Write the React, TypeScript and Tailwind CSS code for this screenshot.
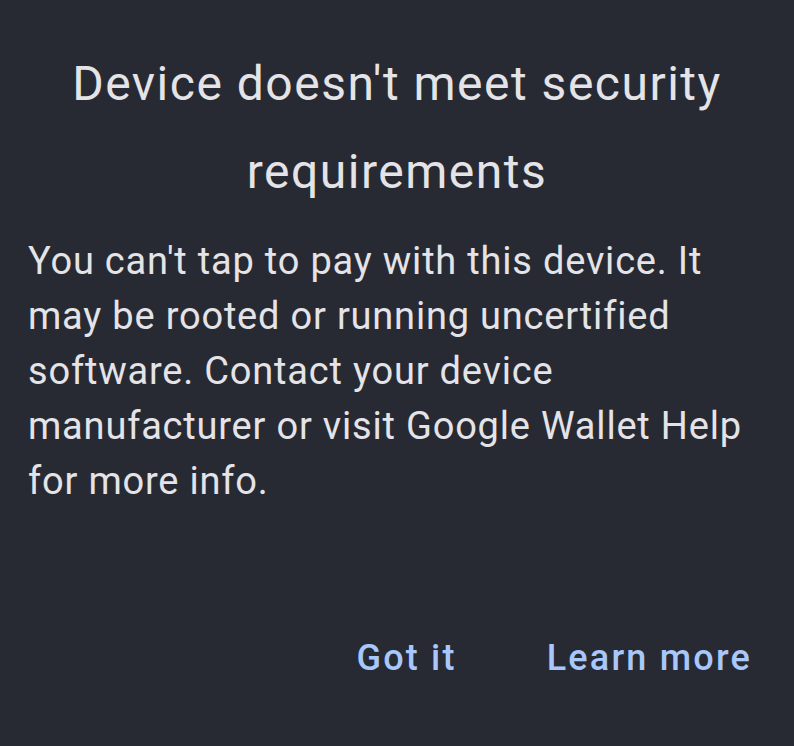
export default function App() {
  return (
    <div className="w-[794px] h-[746px] bg-[#282a33] overflow-hidden flex flex-col" style={{ fontFamily: "Roboto, 'Noto Sans', sans-serif" }}>
      {/* title */}
      <h1 className="mt-[40px] px-[30px] text-center text-[48px] leading-[88px] tracking-[1.5px] text-[#e4e4e8] font-normal">
        Device doesn't meet security requirements
      </h1>
      {/* body */}
      <p className="mt-[18px] pl-[28px] pr-[30px] text-[38px] leading-[55px] tracking-[0.8px] text-[#e4e4e8]">
        You can't tap to pay with this device. It may be rooted or running uncertified software. Contact your device manufacturer or visit Google Wallet Help for more info.
      </p>
      {/* actions */}
      <div className="mt-auto mb-[70px] flex justify-end items-center gap-[90px] pr-[42px]">
        <button className="text-[36px] leading-none font-medium tracking-[2.2px] text-[#a8c7fa]">Got it</button>
        <button className="text-[36px] leading-none font-medium tracking-[2.2px] text-[#a8c7fa]">Learn more</button>
      </div>
    </div>
  );
}
